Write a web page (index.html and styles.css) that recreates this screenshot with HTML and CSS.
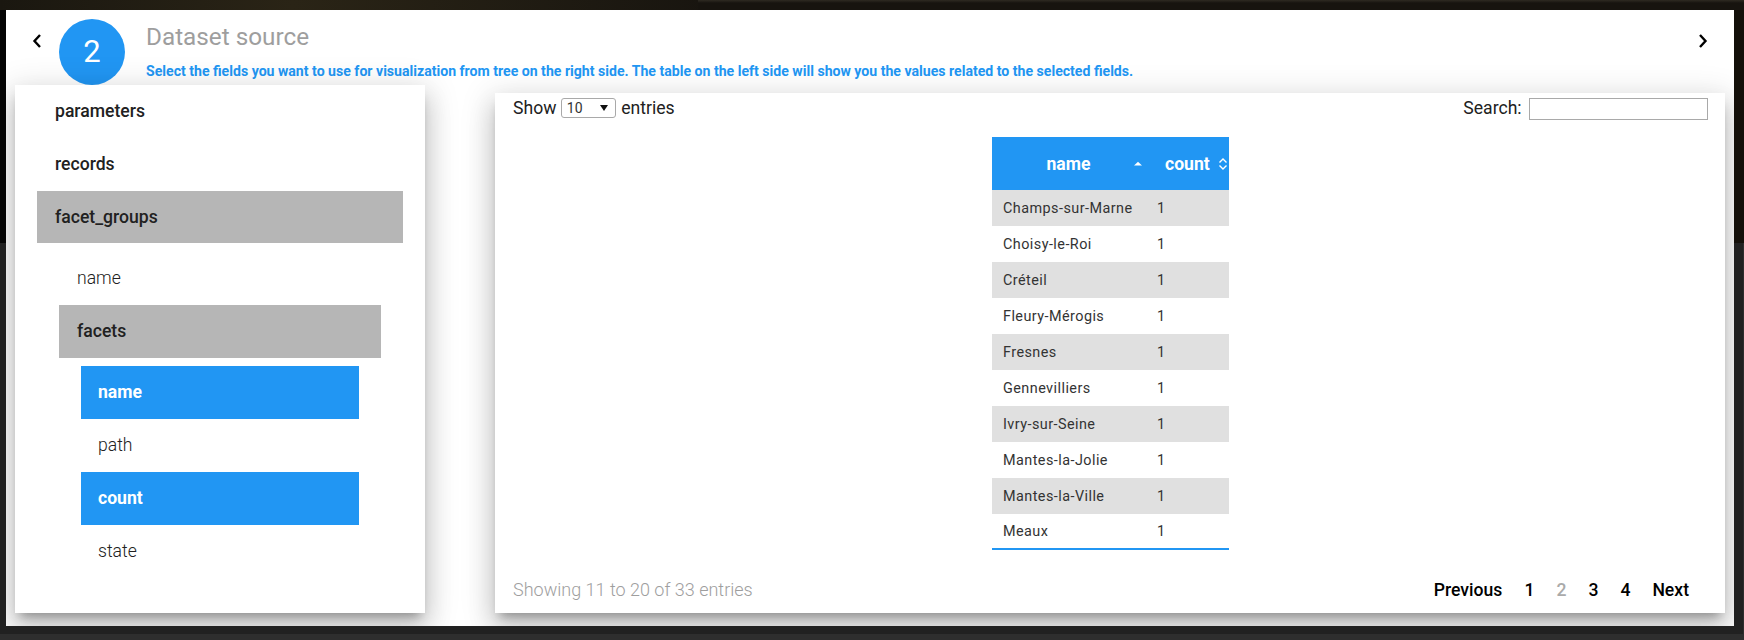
FILE: index.html
```html
<!DOCTYPE html>
<html>
<head>
  <title>Dataset source</title>
  <link rel="stylesheet" href="styles.css">
</head>
<body>
  <div class="panel">
    <div class="step-header">
      <svg class="arrow arrow-prev" width="12" height="16" viewBox="0 0 12 16"><path d="M9 2 L3.5 8 L9 14" fill="none" stroke="#000" stroke-width="2.4"/></svg>
      <div class="step-number">2</div>
      <div class="step-text">
        <div class="step-title">Dataset source</div>
        <div class="step-desc">Select the fields you want to use for visualization from tree on the right side. The table on the left side will show you the values related to the selected fields.</div>
      </div>
      <svg class="arrow arrow-next" width="12" height="16" viewBox="0 0 12 16"><path d="M3 2 L8.5 8 L3 14" fill="none" stroke="#000" stroke-width="2.4"/></svg>
    </div>

    <div class="step-body">
      <div class="card tree-card">
        <ul class="tree">
          <li><div class="node parent">parameters</div></li>
          <li><div class="node parent">records</div></li>
          <li>
            <div class="node parent open">facet_groups</div>
            <ul class="tree sub">
              <li><div class="node">name</div></li>
              <li>
                <div class="node parent open">facets</div>
                <ul class="tree sub">
                  <li><div class="node selected">name</div></li>
                  <li><div class="node">path</div></li>
                  <li><div class="node selected">count</div></li>
                  <li><div class="node">state</div></li>
                </ul>
              </li>
            </ul>
          </li>
        </ul>
      </div>

      <div class="card table-card">
        <div class="table-top">
          <label class="length">Show
            <select><option>10</option><option>25</option><option>50</option></select>
            entries</label>
          <label class="search">Search: <input type="text"></label>
        </div>
        <table class="data">
          <thead>
            <tr>
              <th class="col-name">name
                <svg class="sort" width="10" height="14" viewBox="0 0 10 14"><path d="M1 8.5 L5 4.8 L9 8.5 Z" fill="#fff"/></svg>
              </th>
              <th class="col-count">count
                <svg class="sort" width="10" height="14" viewBox="0 0 10 14"><path d="M1.5 5.5 L5 2 L8.5 5.5 M1.5 8.5 L5 12 L8.5 8.5" fill="none" stroke="#fff" stroke-width="1.4"/></svg>
              </th>
            </tr>
          </thead>
          <tbody>
            <tr><td>Champs-sur-Marne</td><td>1</td></tr>
            <tr><td>Choisy-le-Roi</td><td>1</td></tr>
            <tr><td>Créteil</td><td>1</td></tr>
            <tr><td>Fleury-Mérogis</td><td>1</td></tr>
            <tr><td>Fresnes</td><td>1</td></tr>
            <tr><td>Gennevilliers</td><td>1</td></tr>
            <tr><td>Ivry-sur-Seine</td><td>1</td></tr>
            <tr><td>Mantes-la-Jolie</td><td>1</td></tr>
            <tr><td>Mantes-la-Ville</td><td>1</td></tr>
            <tr><td>Meaux</td><td>1</td></tr>
          </tbody>
        </table>
        <div class="table-bottom">
          <div class="info">Showing 11 to 20 of 33 entries</div>
          <div class="pager">
            <a>Previous</a>
            <a>1</a>
            <a class="current">2</a>
            <a>3</a>
            <a>4</a>
            <a>Next</a>
          </div>
        </div>
      </div>
    </div>
  </div>
</body>
</html>
```

FILE: styles.css
```css
* {
  box-sizing: border-box;
}
body {
  margin: 0;
  height: 640px;
  overflow: hidden;
  background:
    linear-gradient(#2e2a22, #17140f 3px) right top / 60% 10px no-repeat,
    linear-gradient(90deg, #1a1710, #2a2416 40%, #17140f) left top / 42% 10px no-repeat,
    linear-gradient(90deg, #040404, #14100a) left top / 100% 243px no-repeat,
    linear-gradient(#212121, #212121) left top / 1743px 634px no-repeat,
    #2e2e2e;
  font-family: Roboto, "Liberation Sans", sans-serif;
  font-size: 16px;
  color: #212121;
  padding: 10px 10px 0 6px;
}
.panel {
  height: 616px;
  background-color: #fff;
  overflow: hidden;
}

/* header */
.step-header {
  display: flex;
  height: 75px;
  position: relative;
}
.arrow {
  flex: none;
  margin-top: 23px;
}
.arrow-prev {
  margin-left: 25px;
}
.arrow-next {
  margin-left: auto;
  margin-right: 25px;
}
.step-number {
  flex: none;
  width: 66px;
  height: 66px;
  margin: 9px 0 0 16px;
  border-radius: 50%;
  background-color: #2196f3;
  color: #fff;
  font-size: 31px;
  line-height: 66px;
  text-align: center;
}
.step-text {
  margin-left: 21px;
}
.step-title {
  margin-top: 12px;
  font-size: 24.3px;
  line-height: 30px;
  color: #9e9e9e;
}
.step-desc {
  margin-top: 12px;
  font-size: 14.1px;
  line-height: 14px;
  font-weight: 700;
  color: #2196f3;
}

/* cards */
.step-body {
  display: flex;
  align-items: flex-end;
  height: 541px;
  padding: 0 9px 13px 9px;
  justify-content: space-between;
}
.card {
  background-color: #fff;
  box-shadow: 0 16px 24px 2px rgba(0,0,0,0.14), 0 6px 30px 5px rgba(0,0,0,0.12), 0 8px 10px -5px rgba(0,0,0,0.3);
}
.tree-card {
  width: 410px;
  height: 528px;
  position: relative;
}
.table-card {
  width: 1230px;
  height: 520px;
  display: flex;
  flex-direction: column;
  align-items: center;
  padding: 0 17px 0 18px;
  position: relative;
}

/* field tree */
.tree {
  list-style: none;
  margin: 0;
  padding: 0 22px;
}
.tree.sub {
  margin-top: 8.8px;
}
.tree.sub .tree.sub {
  margin-top: 8.4px;
}
.node {
  height: 52.8px;
  line-height: 52.8px;
  padding-left: 18px;
  font-size: 17.6px;
  font-weight: 300;
}
.tree .tree .tree .node {
  padding-left: 17px;
}
.node.parent {
  font-weight: 500;
}
.node.open {
  background-color: #b6b6b6;
}
.node.selected {
  background-color: #2196f3;
  color: #fff;
  font-weight: 700;
}

/* table */
.table-top {
  display: flex;
  align-self: stretch;
  justify-content: space-between;
  height: 44px;
  padding-top: 5px;
  font-weight: 400;
  font-size: 17.6px;
  line-height: 20px;
}
.length select {
  appearance: none;
  width: 55px;
  height: 20px;
  margin: 0 1px 0 0;
  padding-left: 5px;
  border: 1px solid #a9a9a9;
  border-radius: 3px;
  background: #fff url("data:image/svg+xml,%3Csvg xmlns='http://www.w3.org/2000/svg' width='8' height='6'%3E%3Cpath d='M0 0H8L4 6Z' fill='%23111'/%3E%3C/svg%3E") no-repeat right 7px center;
  color: #333;
  font-family: Roboto, "Liberation Sans", sans-serif;
  font-size: 14px;
  vertical-align: top;
}
.search input {
  width: 179px;
  height: 22px;
  margin-left: 3px;
  border: 1px solid #a9a9a9;
  vertical-align: top;
}
.data {
  width: 237px;
  border-collapse: collapse;
  border-bottom: 2px solid #2196f3;
  font-size: 14.4px;
  table-layout: fixed;
}
.data th {
  height: 53px;
  padding: 0;
  background-color: #2196f3;
  color: #fff;
  font-size: 17.6px;
  font-weight: 700;
  position: relative;
}
.sort {
  position: absolute;
  top: 20px;
  right: 1px;
}
.col-name {
  width: 155px;
  padding-right: 1px;
}
.data th.col-name {
  padding-right: 2px;
}
.col-name .sort {
  right: 4px;
}
.data th.col-count {
  text-align: left;
  padding-left: 18px;
}
.data td {
  height: 36px;
  padding: 0 0 0 10px;
  font-weight: 400;
  letter-spacing: 0.45px;
  color: #333;
}
.data td:first-child {
  padding-left: 11px;
}
.data tbody tr:nth-child(odd) td {
  background-color: #e0e0e0;
}
.data tbody tr:last-child td {
  height: 35px;
}
.table-bottom {
  display: flex;
  align-self: stretch;
  justify-content: space-between;
  align-items: center;
  margin-top: 27px;
  line-height: 24px;
}
.info {
  font-size: 18px;
  font-weight: 300;
  color: #9e9e9e;
}
.pager {
  display: flex;
  gap: 22px;
  padding: 1px 19px 0 0;
  font-size: 17.6px;
  font-weight: 500;
  color: #000;
}
.pager .current {
  color: #aaa;
}
```
